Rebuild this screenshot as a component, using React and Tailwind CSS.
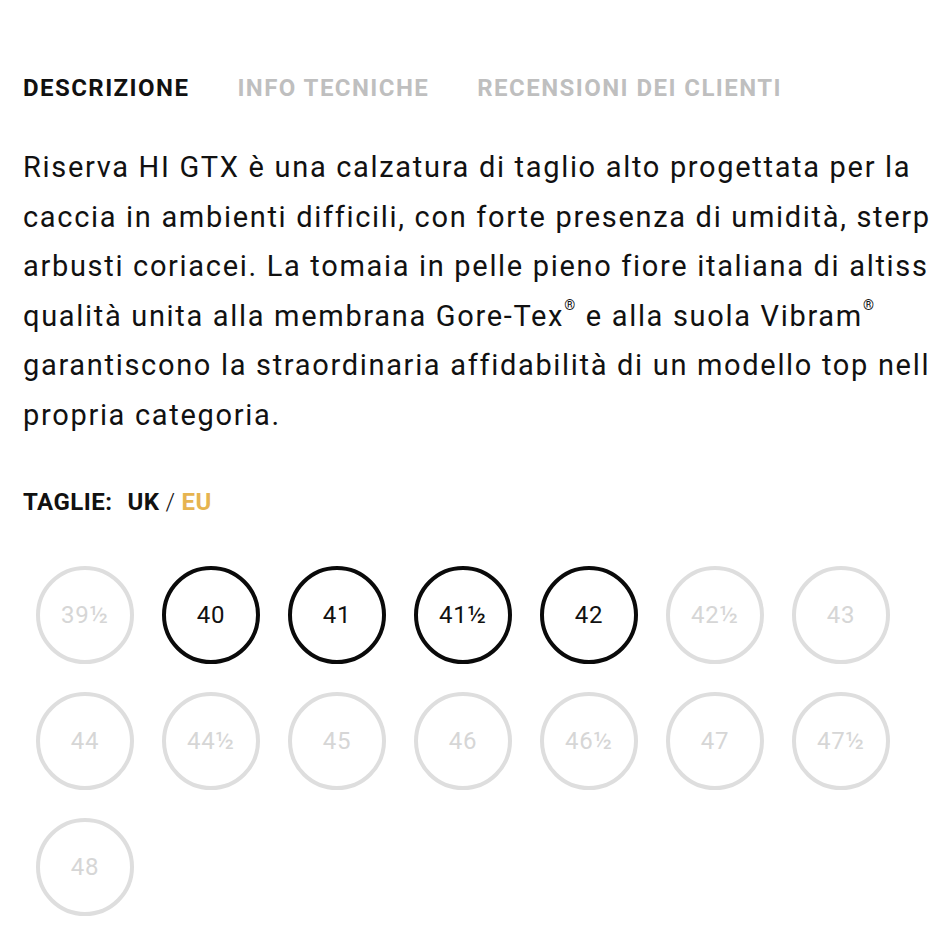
import React from 'react';

const sizes = [
  { label: '39½', available: false },
  { label: '40', available: true },
  { label: '41', available: true },
  { label: '41½', available: true },
  { label: '42', available: true },
  { label: '42½', available: false },
  { label: '43', available: false },
  { label: '44', available: false },
  { label: '44½', available: false },
  { label: '45', available: false },
  { label: '46', available: false },
  { label: '46½', available: false },
  { label: '47', available: false },
  { label: '47½', available: false },
  { label: '48', available: false },
];

const Reg = () => <sup className="text-[14px] align-[9px]">®</sup>;

function ProductDetails() {
  return (
    <div
      className="min-h-screen w-full overflow-hidden bg-white text-[#111] pl-[23px] pt-[72px]"
      style={{ fontFamily: 'Roboto, "Liberation Sans", sans-serif' }}
    >
      {/* Tabs */}
      <div className="flex gap-[48px] text-[24px] leading-[32px] font-bold tracking-[0.06em] whitespace-nowrap">
        <span className="text-[#111]">DESCRIZIONE</span>
        <span className="text-[#bfbfbf]">INFO TECNICHE</span>
        <span className="text-[#bfbfbf]">RECENSIONI DEI CLIENTI</span>
      </div>

      {/* Description: lines run past the right edge, as in the page */}
      <div className="mt-[39px] text-[29px] leading-[49.5px] tracking-[0.058em] whitespace-nowrap">
        <div>Riserva HI GTX è una calzatura di taglio alto progettata per la</div>
        <div>caccia in ambienti difficili, con forte presenza di umidità, sterpi e</div>
        <div>arbusti coriacei. La tomaia in pelle pieno fiore italiana di altissima</div>
        <div>
          qualità unita alla membrana Gore-Tex<Reg /> e alla suola Vibram<Reg />
        </div>
        <div>garantiscono la straordinaria affidabilità di un modello top nella</div>
        <div>propria categoria.</div>
      </div>

      {/* Sizes header */}
      <div className="mt-[46px] flex items-center text-[24px] leading-[32px] font-bold tracking-[0.02em]">
        <span>TAGLIE:</span>
        <span className="ml-[15px]">UK</span>
        <span className="mx-[6px] font-light">/</span>
        <span className="text-[#e6b450]">EU</span>
      </div>

      {/* Size grid */}
      <div className="mt-[48px] ml-[13px] grid grid-cols-[repeat(7,98px)] gap-[28px]">
        {sizes.map((s) => (
          <div
            key={s.label}
            className={
              s.available
                ? 'w-[98px] h-[98px] rounded-full border-4 border-[#0a0a0a] flex items-center justify-center text-[24px] tracking-[0.03em] text-[#111]'
                : 'w-[98px] h-[98px] rounded-full border-4 border-[#dedede] flex items-center justify-center text-[24px] tracking-[0.03em] text-[#d6d6d6]'
            }
          >
            {s.label}
          </div>
        ))}
      </div>
    </div>
  );
}

export default function App() {
  return <ProductDetails />;
}
